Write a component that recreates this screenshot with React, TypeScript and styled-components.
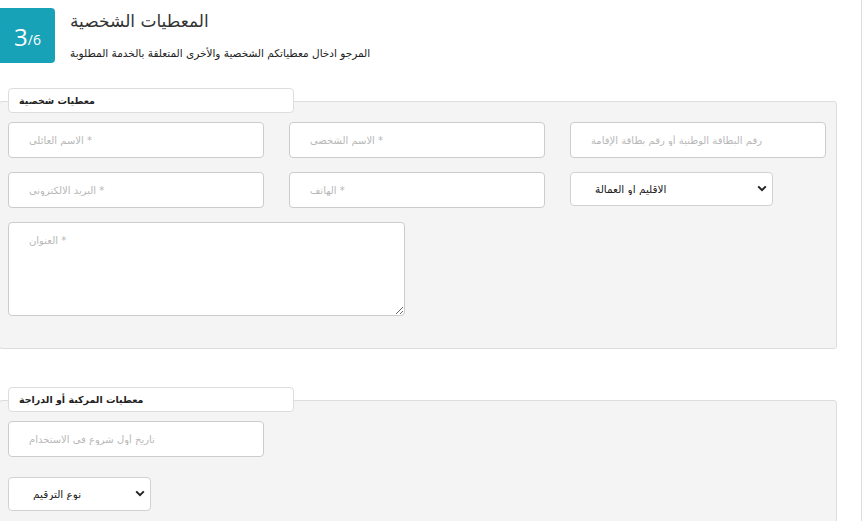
import styled, { createGlobalStyle } from "styled-components";

const GlobalStyle = createGlobalStyle`
  body {
    margin: 0;
    background: #ffffff;
    font-family: "DejaVu Sans", "Noto Sans", sans-serif;
  }
`;

const Page = styled.div`
  width: 861px;
  min-height: 100vh;
  border-right: 1px solid #dddddd;
  overflow: hidden;
`;

const Header = styled.div`
  display: flex;
  align-items: flex-start;
  gap: 15px;
  padding-top: 8px;
`;

const StepBadge = styled.div`
  width: 55px;
  height: 55px;
  border-radius: 0 4px 4px 0;
  background: #17a2b8;
  color: #ffffff;
  display: flex;
  align-items: center;
  justify-content: center;
  font-family: "Open Sans", "Noto Sans", sans-serif;
  font-size: 24px;
  line-height: 1;
  padding-top: 2px;
  box-sizing: border-box;

  small {
    font-size: 14px;
    margin-top: 7px;
  }
`;

const TitleBlock = styled.div`
  display: flex;
  flex-direction: column;
  direction: rtl;
  align-items: flex-end;
  white-space: nowrap;
`;

const Title = styled.h1`
  margin: 1px 0 0;
  font-size: 17px;
  font-weight: normal;
  color: #333333;
  line-height: 24px;
`;

const Subtitle = styled.p`
  margin: 12px 0 0;
  font-size: 10.5px;
  color: #222222;
  line-height: 16px;
`;

const Section = styled.section<{ $top: number }>`
  margin: ${(p) => p.$top}px 0 0 -1px;
  width: 838px;
`;

const Legend = styled.div`
  position: relative;
  z-index: 1;
  margin: 0 0 -12px 9px;
  width: 286px;
  height: 25px;
  box-sizing: border-box;
  padding: 0 10px;
  background: #ffffff;
  border: 1px solid #dddddd;
  border-radius: 4px;
  font-size: 9.5px;
  font-weight: bold;
  color: #222222;
  line-height: 23px;
  direction: rtl;
  text-align: left;
`;

const Panel = styled.div`
  box-sizing: border-box;
  padding: 20px 10px 32px 8px;
  border: 1px solid #dddddd;
  border-radius: 3px;
  background: #f4f4f4;
`;

const FieldGrid = styled.div<{ $rowGap: number }>`
  display: grid;
  grid-template-columns: repeat(3, 256px);
  column-gap: 25px;
  row-gap: ${(p) => p.$rowGap}px;
`;

const TextInput = styled.input`
  width: 256px;
  height: 36px;
  box-sizing: border-box;
  border: 1px solid #cccccc;
  border-radius: 4px;
  background: #ffffff;
  padding: 0 20px;
  font-family: inherit;
  font-size: 10px;
  direction: rtl;
  text-align: left;
  outline: none;

  &::placeholder {
    color: #b8b8b8;
  }
`;

const SelectWrap = styled.div<{ $width: number }>`
  position: relative;
  width: ${(p) => p.$width}px;
  height: 34px;
`;

const Select = styled.select`
  appearance: none;
  width: 100%;
  height: 100%;
  box-sizing: border-box;
  border: 1px solid #d2d2d2;
  border-radius: 4px;
  background: #ffffff;
  padding: 0 24px;
  font-family: inherit;
  font-size: 10.5px;
  color: #222222;
  direction: rtl;
  text-align: left;
  outline: none;
`;

const Chevron = styled.svg`
  position: absolute;
  right: 6px;
  top: 13px;
  pointer-events: none;
`;

const TextAreaRow = styled.div`
  grid-column: 1 / -1;
`;

const TextArea = styled.textarea`
  display: block;
  width: 397px;
  height: 94px;
  box-sizing: border-box;
  border: 1px solid #cccccc;
  border-radius: 4px;
  background: #ffffff;
  padding: 12px 20px;
  font-family: inherit;
  font-size: 10px;
  text-align: left;
  outline: none;

  &::placeholder {
    color: #b8b8b8;
  }
`;

function ChevronIcon() {
  return (
    <Chevron width="10" height="7" viewBox="0 0 10 7">
      <path d="M1.2 1.4 L5 5.2 L8.8 1.4" fill="none" stroke="#222" strokeWidth="2" />
    </Chevron>
  );
}

function Dropdown({ width, label }: { width: number; label: string }) {
  return (
    <SelectWrap $width={width}>
      <Select defaultValue="">
        <option value="">{label}</option>
      </Select>
      <ChevronIcon />
    </SelectWrap>
  );
}

function App() {
  return (
    <Page>
      <GlobalStyle />
      <Header>
        <StepBadge>
          3<small>/6</small>
        </StepBadge>
        <TitleBlock>
          <Title>المعطيات الشخصية</Title>
          <Subtitle>المرجو ادخال معطياتكم الشخصية والأخرى المتعلقة بالخدمة المطلوبة</Subtitle>
        </TitleBlock>
      </Header>

      <Section $top={25}>
        <Legend>معطيات شخصية</Legend>
        <Panel>
          <FieldGrid $rowGap={14}>
            <TextInput placeholder="* الاسم العائلي" />
            <TextInput placeholder="* الاسم الشخصي" />
            <TextInput placeholder="رقم البطاقة الوطنية أو رقم بطاقة الإقامة" />
            <TextInput placeholder="* البريد الالكتروني" />
            <TextInput placeholder="* الهاتف" />
            <Dropdown width={203} label="الاقليم او العمالة" />
            <TextAreaRow>
              <TextArea placeholder="العنوان *" />
            </TextAreaRow>
          </FieldGrid>
        </Panel>
      </Section>

      <Section $top={38}>
        <Legend>معطيات المركبة أو الدراجة</Legend>
        <Panel>
          <FieldGrid $rowGap={20}>
            <TextInput placeholder="تاريخ أول شروع في الاستخدام" />
            <div />
            <div />
            <Dropdown width={143} label="نوع الترقيم" />
          </FieldGrid>
        </Panel>
      </Section>
    </Page>
  );
}

export default App;
